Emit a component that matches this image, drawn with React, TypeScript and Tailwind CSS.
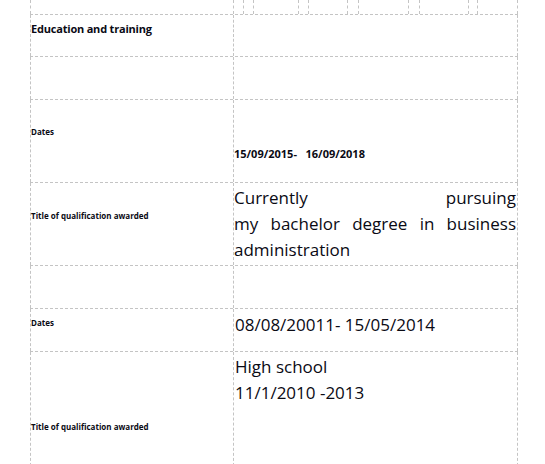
import React from "react";

const line = "border-[#c4c4c4] border-dashed";

const stripCells = [9, 10, 45, 10, 39, 11, 50, 11, 49, 9, 41];

const Row = ({
  h,
  left,
  right,
  leftClass = "",
  rightClass = "",
}: {
  h: string;
  left?: React.ReactNode;
  right?: React.ReactNode;
  leftClass?: string;
  rightClass?: string;
}) => (
  <div className={`flex w-max ${h} border-t ${line}`}>
    <div className={`w-[203px] shrink-0 border-l ${line} ${leftClass}`}>{left}</div>
    <div className={`w-[285px] shrink-0 border-l border-r ${line} ${rightClass}`}>{right}</div>
  </div>
);

const App = () => {
  return (
    <div className="w-[545px] h-[464px] overflow-hidden bg-white pl-[30px] font-['Open_Sans',sans-serif] text-[#0a0a14]">
      {/* top strip of tiny cells */}
      <div className="flex w-max h-[14px]">
        <div className={`w-[203px] shrink-0 border-l ${line}`} />
        <div className={`flex w-[285px] shrink-0 border-l border-r ${line}`}>
          {stripCells.map((w, i) => (
            <div
              key={i}
              style={{ width: w }}
              className={`shrink-0 ${i > 0 ? `border-l ${line}` : ""}`}
            />
          ))}
        </div>
      </div>

      <Row
        h="h-[42px]"
        leftClass="pt-[7px]"
        left={<p className="text-[11px] font-bold leading-[14px] tracking-[-0.2px]">Education and training</p>}
      />
      <Row h="h-[43px]" />
      <Row
        h="h-[83px]"
        leftClass="pt-[27px]"
        rightClass="pt-[47px]"
        left={<p className="text-[8px] font-bold leading-[10px]">Dates</p>}
        right={
          <p className="text-[11px] font-bold leading-[14px] whitespace-pre">
            {"15/09/2015-   16/09/2018"}
          </p>
        }
      />
      <Row
        h="h-[83px]"
        leftClass="pt-[28px]"
        left={
          <p className="text-[8px] font-bold leading-[10px]">
            Title of qualification awarded
          </p>
        }
        right={
          <div className="text-[17px] leading-[26px] text-justify pt-[2px] pr-px">
            <p className="[text-align-last:justify]">Currently pursuing</p>
            <p>my bachelor degree in business administration</p>
          </div>
        }
      />
      <Row h="h-[43px]" />
      <Row
        h="h-[43px]"
        leftClass="pt-[9px]"
        rightClass="pt-[3px]"
        left={<p className="text-[8px] font-bold leading-[10px]">Dates</p>}
        right={<p className="text-[17px] leading-[26px] pl-px">08/08/20011- 15/05/2014</p>}
      />
      <Row
        h="h-[120px]"
        leftClass="pt-[70px]"
        rightClass="pt-[2px]"
        left={
          <p className="text-[8px] font-bold leading-[10px]">
            Title of qualification awarded
          </p>
        }
        right={
          <p className="text-[17px] leading-[26px] pl-px">
            High school
            <br />
            11/1/2010 -2013
          </p>
        }
      />
    </div>
  );
};

export default App;
